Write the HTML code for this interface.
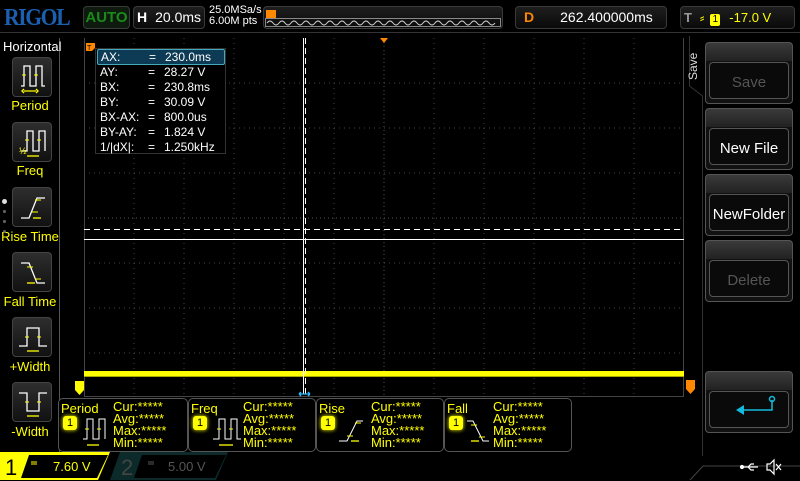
<!DOCTYPE html>
<html><head><meta charset="utf-8"><style>
*{margin:0;padding:0;box-sizing:border-box}
body{width:800px;height:480px;background:#000;overflow:hidden;position:relative;font-family:"Liberation Sans",sans-serif;color:#fff}
.a{position:absolute}
.box{position:absolute;border:1px solid #3a3a3a;border-radius:4px;background:linear-gradient(#1e1e1e,#0a0a0a)}
.lbl{position:absolute;color:#ff0;font-size:13px;width:60px;text-align:center;left:0}
.ic{position:absolute;left:12px;width:40px;height:40px;border:1px solid #444;border-radius:4px;background:linear-gradient(#2e2e2e,#111)}
.rb{position:absolute;left:705px;width:88px;height:62px;border:1px solid #555;border-radius:4px;background:linear-gradient(#3a3a3a 0,#222 18px,#111 18px)}
.rb div{position:absolute;left:3px;right:3px;top:19px;bottom:4px;border:1px solid #555;border-radius:4px;background:#0a0a0a;font-size:15px;text-align:center;line-height:40px}
.mb{position:absolute;top:398px;height:54px;border:1px solid #555;border-radius:5px;background:#000;color:#ff0;font-size:13px}
.mb .t{position:absolute;left:2px;top:2px;font-size:13px}
.mb .s{position:absolute;left:54px;top:2px;line-height:12px;font-size:13px}
.one{position:absolute;left:4px;top:17px;width:14px;height:14px;background:#ff0;color:#000;border-radius:3px;font-size:11px;text-align:center;line-height:14px;box-shadow:0 0 4px #ff0}
.cur{font-size:12px;line-height:15px;color:#fff}
</style></head><body>
<div class="a" style="left:4px;top:5px;font-family:'Liberation Serif',serif;font-weight:bold;font-size:24px;color:#1a5fb0;letter-spacing:-1.5px;transform:scaleX(0.9);transform-origin:left">RIGOL</div>
<div class="box" style="left:83px;top:6px;width:47px;height:23px;color:#1a8a1a;font-size:15px;text-align:center;line-height:21px;font-weight:bold;background:#0d1a0d">AUTO</div>
<div class="box" style="left:133px;top:6px;width:72px;height:23px;font-size:14px;line-height:21px"><b style="margin-left:3px">H</b><span style="margin-left:8px">20.0ms</span></div>
<div class="a" style="left:209px;top:5px;font-size:11px;line-height:11px">25.0MSa/s<br>6.00M pts</div>
<div class="box" style="left:263px;top:6px;width:240px;height:23px"></div>
<div class="a" style="left:266px;top:10px;width:10px;height:8px;background:#f80"></div>
<svg class="a" style="left:265px;top:18px" width="236" height="9"><rect x="0.5" y="0.5" width="235" height="8" fill="none" stroke="#888"/><path d="M2 5 q3 -4 6 0 t6 0 t6 0 t6 0 t6 0 t6 0 t6 0 t6 0 t6 0 t6 0 t6 0 t6 0 t6 0 t6 0 t6 0 t6 0 t6 0 t6 0 t6 0 t6 0 t6 0 t6 0 t6 0 t6 0 t6 0 t6 0 t6 0 t6 0 t6 0 t6 0 t6 0 t6 0 t6 0 t6 0 t6 0 t6 0 t6 0 t6 0" fill="none" stroke="#ccc" stroke-width="1"/></svg>
<div class="box" style="left:515px;top:6px;width:152px;height:23px;font-size:14px;line-height:21px"><b style="color:#f80;margin-left:8px">D</b><span style="margin-left:26px">262.400000ms</span></div>
<div class="box" style="left:680px;top:6px;width:115px;height:23px;font-size:13px;line-height:21px"><b style="color:#999;margin-left:3px">T</b><span style="color:#ff0;margin-left:8px">⸗</span><span style="display:inline-block;background:#ff0;color:#000;width:10px;height:12px;line-height:12px;font-size:10px;text-align:center;margin-left:6px;border-radius:2px">1</span><span style="color:#ff0;margin-left:9px">-17.0 V</span></div>
<div class="a" style="left:0;top:32px;width:800px;height:1px;background:#333"></div>
<div class="a" style="left:59px;top:38px;width:1px;height:414px;background:#555"></div>
<div class="a" style="left:3px;top:39px;font-size:13px">Horizontal</div>
<div class="ic" style="top:57px"><svg width="40" height="40" fill="none"><path d="M8 28h3V8h6v20h6V8h6v20h3" stroke="#fff" stroke-width="1.3"/><path d="M9 17h4M21 17h4" stroke="#ff0"/><path d="M11 33h12M11 31l-2 2 2 2M23 31l2 2-2 2" stroke="#ff0" stroke-width="1.3"/></svg></div>
<div class="lbl" style="top:98px">Period</div>
<div class="ic" style="top:122px"><svg width="40" height="40" fill="none"><path d="M8 28h6V8h6v20h6V8h6v20" stroke="#fff" stroke-width="1.3"/><path d="M12 17h4M24 17h4" stroke="#ff0"/><path d="M14 33h12" stroke="#ff0" stroke-width="1.3"/><text x="6" y="31" fill="#ff0" font-size="9">½</text></svg></div>
<div class="lbl" style="top:163px">Freq</div>
<div class="ic" style="top:187px"><svg width="40" height="40" fill="none"><path d="M8 30h8l8-20h8" stroke="#fff" stroke-width="1.3"/><path d="M19 24h6M22 12h6" stroke="#ff0"/><path d="M20 30h8" stroke="#ff0" stroke-width="1.3"/></svg></div>
<div class="lbl" style="top:229px">Rise Time</div>
<div class="ic" style="top:252px"><svg width="40" height="40" fill="none"><path d="M8 10h8l8 20h8" stroke="#fff" stroke-width="1.3"/><path d="M14 14h6M22 26h6" stroke="#ff0"/><path d="M14 30h8" stroke="#ff0" stroke-width="1.3"/></svg></div>
<div class="lbl" style="top:294px">Fall Time</div>
<div class="ic" style="top:317px"><svg width="40" height="40" fill="none"><path d="M6 28h8V10h12v18h8" stroke="#fff" stroke-width="1.3"/><path d="M12 19h4M24 19h4" stroke="#ff0"/><path d="M14 33h12" stroke="#ff0" stroke-width="1.3"/></svg></div>
<div class="lbl" style="top:359px">+Width</div>
<div class="ic" style="top:382px"><svg width="40" height="40" fill="none"><path d="M6 10h8v18h12V10h8" stroke="#fff" stroke-width="1.3"/><path d="M12 19h4M24 19h4" stroke="#ff0"/><path d="M14 33h12" stroke="#ff0" stroke-width="1.3"/></svg></div>
<div class="lbl" style="top:424px">-Width</div>
<div class="a" style="left:2px;top:199px;width:5px;height:5px;border-radius:50%;background:#ddd"></div>
<div class="a" style="left:3px;top:210px;width:3px;height:3px;border-radius:50%;background:#666"></div>
<div class="a" style="left:3px;top:220px;width:3px;height:3px;border-radius:50%;background:#666"></div>
<div class="a" style="left:3px;top:230px;width:3px;height:3px;border-radius:50%;background:#666"></div>
<svg class="a" style="left:0;top:0" width="800" height="480">
<g stroke="#444" stroke-width="1" stroke-dasharray="1 4">
<path d="M134 38V397M184 38V397M234 38V397M284 38V397M334 38V397M434 38V397M484 38V397M534 38V397M584 38V397M634 38V397"/>
<path d="M84 83H684M84 128H684M84 173H684M84 263H684M84 308H684M84 353H684"/>
</g>
<g stroke="#555" stroke-dasharray="1 3"><path d="M384 38V397M84 218H684"/></g>
<path d="M84.5 38V397M683.5 38V397M84 396.5H684" stroke="#444"/>
<rect x="84" y="371" width="600" height="6" fill="#ff0"/>
<rect x="84" y="376" width="600" height="1" fill="#aa0"/>
<path d="M84 229.5H684" stroke="#fff" stroke-dasharray="6 4"/>
<path d="M84 239.5H684" stroke="#fff"/>
<path d="M303.5 38V394" stroke="#fff"/>
<path d="M305.5 38V394" stroke="#fff" stroke-dasharray="6 4"/>
<path d="M299 394h11M299 394l2-2M299 394l2 2M310 394l-2-2M310 394l-2 2" stroke="#3bf" stroke-width="1.3"/>
<path d="M380 38h8l-4 5z" fill="#f80"/>
<path d="M86 43h9v5l-3 3h-6z" fill="#f80"/><text x="87" y="50" font-size="7" fill="#000">T</text>
<path d="M75 381h9v9l-4.5 5l-4.5-5z" fill="#ff0"/>
<path d="M686 380h9v9l-4.5 5l-4.5-5z" fill="#f80"/>
</svg>
<div class="a" style="left:95px;top:48px;width:131px;height:106px;border:1px solid #333;background:#000;padding:0 0 0 4px">
<div class="cur" style="background:#0d3a55;border:1px solid #4ab;border-radius:2px;margin-left:-3px;padding-left:3px;height:16px;line-height:14px;width:128px"><span style="display:inline-block;width:48px">AX:</span><span style="display:inline-block;width:16px">=</span>230.0ms</div>
<div class="cur"><span style="display:inline-block;width:48px">AY:</span><span style="display:inline-block;width:16px">=</span>28.27 V</div>
<div class="cur"><span style="display:inline-block;width:48px">BX:</span><span style="display:inline-block;width:16px">=</span>230.8ms</div>
<div class="cur"><span style="display:inline-block;width:48px">BY:</span><span style="display:inline-block;width:16px">=</span>30.09 V</div>
<div class="cur"><span style="display:inline-block;width:48px">BX-AX:</span><span style="display:inline-block;width:16px">=</span>800.0us</div>
<div class="cur"><span style="display:inline-block;width:48px">BY-AY:</span><span style="display:inline-block;width:16px">=</span>1.824 V</div>
<div class="cur"><span style="display:inline-block;width:48px">1/|dX|:</span><span style="display:inline-block;width:16px">=</span>1.250kHz</div>
</div>
<div class="mb" style="left:58px;width:130px"><div class="t">Period</div><div class="one">1</div><svg class="a" style="left:22px;top:14px" width="30" height="40" fill="none"><path d="M2 26h4V6h6v20h6V6h6v20" stroke="#fff"/><path d="M4 16h4M16 16h4" stroke="#ff0"/><path d="M6 32h12" stroke="#ff0" stroke-width="1.3"/></svg><div class="s">Cur:*****<br>Avg:*****<br>Max:*****<br>Min:*****</div></div>
<div class="mb" style="left:188px;width:128px"><div class="t">Freq</div><div class="one">1</div><svg class="a" style="left:18px;top:14px" width="34" height="40" fill="none"><path d="M6 26h6V6h6v20h6V6h6v20h4" stroke="#fff"/><path d="M10 16h4M22 16h4" stroke="#ff0"/><path d="M12 32h14" stroke="#ff0" stroke-width="1.3"/></svg><div class="s">Cur:*****<br>Avg:*****<br>Max:*****<br>Min:*****</div></div>
<div class="mb" style="left:316px;width:128px"><div class="t">Rise</div><div class="one">1</div><svg class="a" style="left:20px;top:14px" width="34" height="40" fill="none"><path d="M2 28h8l10-20h6" stroke="#fff"/><path d="M10 23h6M18 10h6" stroke="#ff0"/><path d="M14 28h8" stroke="#ff0" stroke-width="1.3"/></svg><div class="s">Cur:*****<br>Avg:*****<br>Max:*****<br>Min:*****</div></div>
<div class="mb" style="left:444px;width:128px"><div class="t">Fall</div><div class="one">1</div><svg class="a" style="left:20px;top:14px" width="34" height="40" fill="none"><path d="M2 8h6l10 20h6" stroke="#fff"/><path d="M6 12h6M14 24h6" stroke="#ff0"/><path d="M6 28h8" stroke="#ff0" stroke-width="1.3"/></svg><div class="s" style="left:48px">Cur:*****<br>Avg:*****<br>Max:*****<br>Min:*****</div></div>
<svg class="a" style="left:680px;top:36px" width="120" height="420" fill="none"><path d="M9.5 0V50L22.5 60V420" stroke="#333"/></svg>
<div class="a" style="left:686px;top:80px;transform:rotate(-90deg);transform-origin:left top;font-size:12px;color:#ddd">Save</div>
<div class="rb" style="top:42px"><div style="color:#555">Save</div></div>
<div class="rb" style="top:108px"><div>New File</div></div>
<div class="rb" style="top:174px"><div>NewFolder</div></div>
<div class="rb" style="top:240px"><div style="color:#555">Delete</div></div>
<div class="rb" style="top:371px"><div><svg width="80" height="38" style="display:block"><path d="M62 8v10H34" stroke="#1bd" stroke-width="1.5" fill="none"/><circle cx="62" cy="7" r="2.5" stroke="#1bd" fill="none" stroke-width="1.5"/><path d="M26 18l8-5v10z" fill="#1bd"/></svg></div></div>
<svg class="a" style="left:0;top:452px" width="800" height="28">
<path d="M0 0H110L98 28H0z" fill="#ff0"/>
<path d="M29 3H108L97 26H21z" fill="#000"/>
<path d="M120 0H228L216 28H110z" fill="#0c2a2a"/>
<path d="M142 3H226L215 26H134z" fill="#000"/>
<path d="M690 28L703 14H800" stroke="#444" fill="none"/>
<path d="M31 10h6M31 12h6" stroke="#ff0"/>
<path d="M148 10h6M148 12h6" stroke="#555"/>
<g stroke="#fff" fill="none" stroke-width="1.2">
<path d="M742 15h16M748 15l3-3h3M748 15l3 3h3"/><circle cx="742" cy="15" r="1.5" fill="#fff"/>
<path d="M767 12h3l4-4v14l-4-4h-3z"/><path d="M776 12l5 6M781 12l-5 6"/>
</g>
</svg>
<div class="a" style="left:5px;top:455px;font-size:22px;color:#000">1</div>
<div class="a" style="left:53px;top:459px;font-size:13px;color:#ff0">7.60 V</div>
<div class="a" style="left:121px;top:455px;font-size:22px;color:#444">2</div>
<div class="a" style="left:168px;top:459px;font-size:13px;color:#555">5.00 V</div>
</body></html>
